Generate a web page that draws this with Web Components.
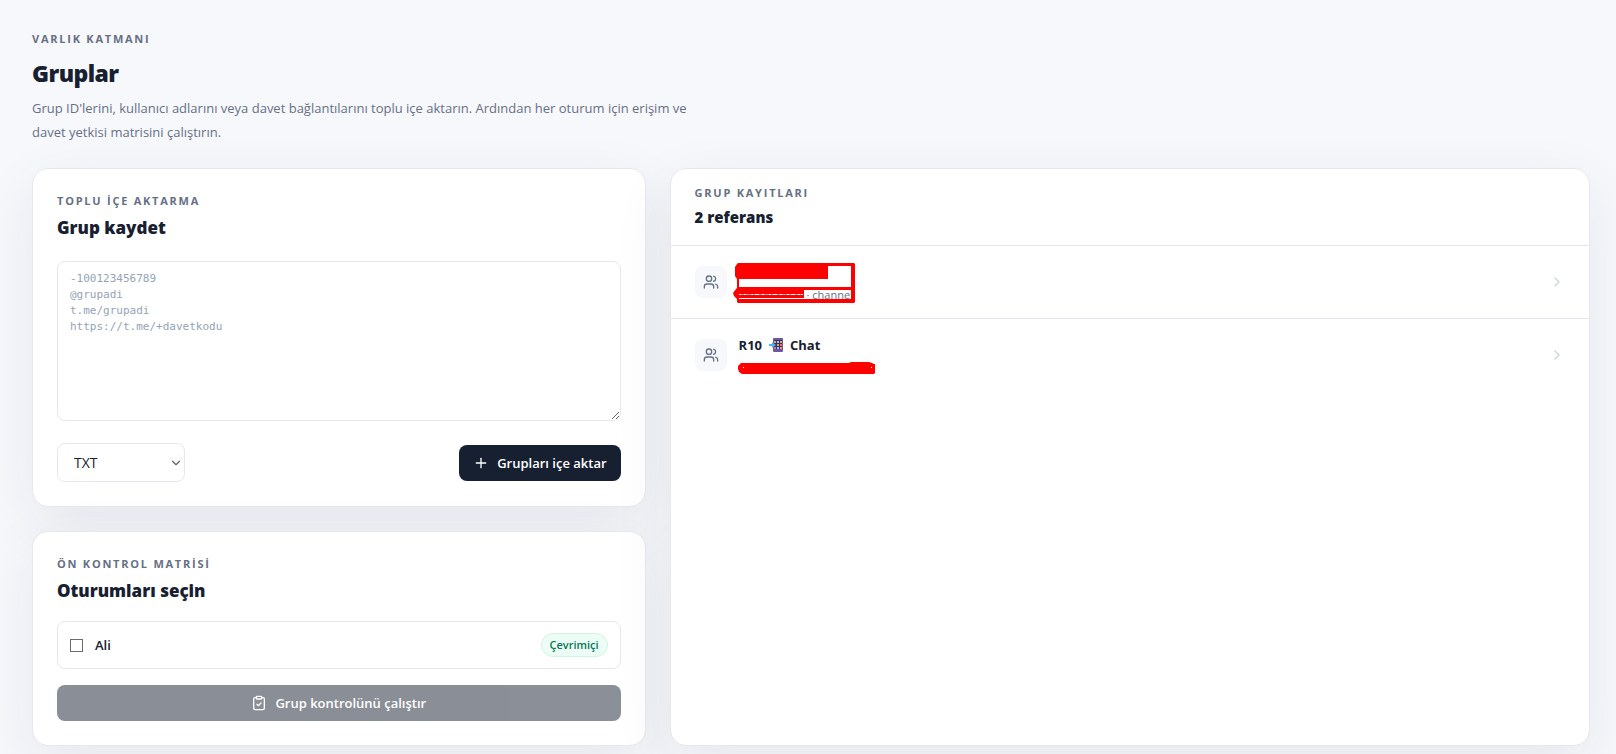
<!DOCTYPE html>
<html lang="tr">
<head>
<meta charset="utf-8">
<meta name="viewport" content="width=device-width, initial-scale=1">
<title>Gruplar</title>
<style>
  :root {
    --ink: #172030;
    --muted: #667085;
    --line: #e6e8ee;
    --surface: #ffffff;
    --canvas: #f7f8fc;
  }

  body {
    margin: 0;
    background: var(--canvas);
    color: var(--ink);
    font-family: "Segoe UI", "Open Sans", "Noto Sans", sans-serif;
    font-size: 13px;
    line-height: 20px;
  }
</style>
</head>
<body>
<groups-page></groups-page>

<script>
// small line icons on a 24 unit grid
const ICONS = {
  users: '<path d="M16 21v-2a4 4 0 0 0-4-4H6a4 4 0 0 0-4 4v2"/><circle cx="9" cy="7" r="4"/><path d="M22 21v-2a4 4 0 0 0-3-3.87"/><path d="M16 3.13a4 4 0 0 1 0 7.75"/>',
  plus: '<path d="M5 12h14"/><path d="M12 5v14"/>',
  chevron: '<path d="m9 18 6-6-6-6"/>',
  down: '<path d="m6 9 6 6 6-6"/>',
  clipboard: '<rect x="8" y="2" width="8" height="4" rx="1"/><path d="M16 4h2a2 2 0 0 1 2 2v14a2 2 0 0 1-2 2H6a2 2 0 0 1-2-2V6a2 2 0 0 1 2-2h2"/><path d="m9 14 2 2 4-4"/>'
};

class LineIcon extends HTMLElement {
  constructor() {
    super();
    this.attachShadow({ mode: 'open' });
  }

  connectedCallback() {
    this.shadowRoot.innerHTML = `
      <style>
        :host { display: block; width: 16px; height: 16px; flex: none; }
        svg { display: block; width: 100%; height: 100%; }
      </style>
      <svg viewBox="0 0 24 24" fill="none" stroke="currentColor" stroke-width="2"
        stroke-linecap="round" stroke-linejoin="round" aria-hidden="true">${ICONS[this.getAttribute('name')]}</svg>
    `;
  }
}
customElements.define('line-icon', LineIcon);

class SectionHeading extends HTMLElement {
  constructor() {
    super();
    this.attachShadow({ mode: 'open' });
    this.shadowRoot.innerHTML = `
      <style>
        :host { display: block; }
        .eyebrow {
          margin: 0 0 5px;
          color: var(--muted);
          font-size: 11px;
          font-weight: 700;
          line-height: 16px;
          letter-spacing: 0.16em;
        }
        .title ::slotted(*) {
          margin: 0;
          font-size: 17px;
          font-weight: 800;
          line-height: 28px;
        }
        :host([size="small"]) .eyebrow { margin-bottom: 4px; }
        :host([size="small"]) .title ::slotted(*) { font-size: 15px; line-height: 24px; }
        :host([size="large"]) .eyebrow { margin-bottom: 10px; }
        :host([size="large"]) .title ::slotted(*) {
          font-size: 23px;
          line-height: 32px;
          letter-spacing: -0.025em;
        }
      </style>
      <p class="eyebrow"><slot name="eyebrow"></slot></p>
      <div class="title"><slot></slot></div>
    `;
  }
}
customElements.define('section-heading', SectionHeading);

class PanelCard extends HTMLElement {
  constructor() {
    super();
    this.attachShadow({ mode: 'open' });
    this.shadowRoot.innerHTML = `
      <style>
        :host {
          display: block;
          box-sizing: border-box;
          padding: 24px;
          background: var(--surface);
          border: 1px solid var(--line);
          border-radius: 16px;
          box-shadow: 0 18px 60px rgba(23, 32, 48, 0.08);
        }
        :host([flush]) { padding: 0; }
      </style>
      <slot></slot>
    `;
  }
}
customElements.define('panel-card', PanelCard);

class ActionButton extends HTMLElement {
  constructor() {
    super();
    this.attachShadow({ mode: 'open' });
  }

  connectedCallback() {
    const disabled = this.hasAttribute('disabled') ? 'disabled' : '';
    this.shadowRoot.innerHTML = `
      <style>
        :host { display: block; }
        button {
          display: flex;
          align-items: center;
          justify-content: center;
          gap: 8px;
          width: 100%;
          height: 36px;
          padding: 0 14px;
          border: 0;
          border-radius: 8px;
          background: var(--ink);
          color: #fff;
          font: inherit;
          font-weight: 600;
          cursor: pointer;
        }
        button:disabled { opacity: 0.5; cursor: not-allowed; }
      </style>
      <button type="button" ${disabled}>
        <line-icon name="${this.getAttribute('icon')}"></line-icon>
        <slot></slot>
      </button>
    `;
  }
}
customElements.define('action-button', ActionButton);

class ImportForm extends HTMLElement {
  constructor() {
    super();
    this.attachShadow({ mode: 'open' });
    this.shadowRoot.innerHTML = `
      <style>
        :host { display: block; margin-top: 19px; }
        textarea, select {
          box-sizing: border-box;
          background: var(--surface);
          border: 1px solid var(--line);
          border-radius: 8px;
          color: var(--ink);
        }
        textarea {
          display: block;
          width: 100%;
          height: 160px;
          margin: 0;
          padding: 9px 12px;
          font: 11px/16px Consolas, "DejaVu Sans Mono", monospace;
          resize: vertical;
        }
        textarea::placeholder { color: #94a3b8; opacity: 1; }
        .actions {
          display: flex;
          align-items: center;
          justify-content: space-between;
          gap: 12px;
          margin-top: 22px;
        }
        .picker { display: grid; align-items: center; }
        .picker > * { grid-area: 1 / 1; }
        .picker line-icon {
          width: 14px;
          height: 14px;
          margin-right: 2px;
          justify-self: end;
          color: #5f6368;
          pointer-events: none;
        }
        select {
          appearance: none;
          width: 128px;
          height: 39px;
          padding: 0 16px;
          font: inherit;
          font-size: 14px;
        }
      </style>
      <textarea aria-label="Grup listesi" placeholder="-100123456789&#10;@grupadi&#10;t.me/grupadi&#10;https://t.me/+davetkodu"></textarea>
      <div class="actions">
        <div class="picker">
          <select aria-label="Biçim"><option>TXT</option></select>
          <line-icon name="down"></line-icon>
        </div>
        <action-button icon="plus">Grupları içe aktar</action-button>
      </div>
    `;
  }
}
customElements.define('import-form', ImportForm);

class SessionOption extends HTMLElement {
  constructor() {
    super();
    this.attachShadow({ mode: 'open' });
    this.shadowRoot.innerHTML = `
      <style>
        :host { display: block; margin: 16px 0; }
        label {
          display: flex;
          align-items: center;
          gap: 12px;
          box-sizing: border-box;
          height: 48px;
          padding: 0 12px;
          border: 1px solid var(--line);
          border-radius: 8px;
          font-weight: 600;
        }
        input {
          appearance: none;
          width: 13px;
          height: 13px;
          margin: 0;
          border: 1px solid #6b6b6b;
          background: #fff;
        }
        input:checked { background: var(--ink); }
        .status {
          margin-left: auto;
          padding: 3px 8px;
          border: 1px solid #d1f5e4;
          border-radius: 12px;
          background: #ecfdf5;
          color: #047857;
          font-size: 11px;
          font-weight: 600;
          line-height: 16px;
        }
      </style>
      <label>
        <input type="checkbox">
        <slot></slot>
        <span class="status"><slot name="status"></slot></span>
      </label>
    `;
  }
}
customElements.define('session-option', SessionOption);

class GroupRow extends HTMLElement {
  constructor() {
    super();
    this.attachShadow({ mode: 'open' });
    this.shadowRoot.innerHTML = `
      <style>
        :host { display: block; border-top: 1px solid var(--line); }
        a {
          display: flex;
          align-items: center;
          gap: 12px;
          padding: 16px 24px;
          color: inherit;
          text-decoration: none;
        }
        .avatar {
          display: grid;
          place-items: center;
          width: 32px;
          height: 32px;
          border-radius: 8px;
          background: var(--canvas);
          color: var(--muted);
        }
        .text { position: relative; flex: 1; min-width: 0; }
        .name {
          display: flex;
          align-items: center;
          gap: 7px;
          height: 20px;
          font-weight: 700;
        }
        .meta {
          height: 16px;
          margin-top: 4px;
          color: var(--muted);
          font-size: 11px;
          line-height: 18px;
        }
        .go { color: #cbd5e1; }
        ::slotted(svg) { flex: none; }
      </style>
      <a href="#">
        <span class="avatar"><line-icon name="users"></line-icon></span>
        <div class="text">
          <div class="name"><slot name="name"></slot></div>
          <div class="meta"><slot name="meta"></slot></div>
          <slot name="mark"></slot>
        </div>
        <line-icon class="go" name="chevron"></line-icon>
      </a>
    `;
  }
}
customElements.define('group-row', GroupRow);

class GroupsPage extends HTMLElement {
  constructor() {
    super();
    this.attachShadow({ mode: 'open' });
    this.shadowRoot.innerHTML = `
      <style>
        :host { display: block; padding: 31px 26px 8px 32px; }
        .intro {
          max-width: 672px;
          margin: 7px 0 24px;
          color: var(--muted);
          line-height: 24px;
        }
        .layout {
          display: grid;
          grid-template-columns: minmax(0, 2fr) minmax(0, 3fr);
          gap: 24px;
        }
        .side { display: grid; gap: 24px; align-content: start; }
        .list-head { padding: 16px 24px; }
        .mark { position: absolute; left: -6px; top: 0; overflow: visible; }
        .known { padding-left: 68px; }
      </style>
      <header>
        <section-heading size="large"><span slot="eyebrow">VARLIK KATMANI</span><h1>Gruplar</h1></section-heading>
        <p class="intro">Grup ID'lerini, kullanıcı adlarını veya davet bağlantılarını toplu içe aktarın. Ardından her oturum için erişim ve davet yetkisi matrisini çalıştırın.</p>
      </header>
      <main class="layout">
        <div class="side">
          <panel-card>
            <section-heading><span slot="eyebrow">TOPLU İÇE AKTARMA</span><h2>Grup kaydet</h2></section-heading>
            <import-form></import-form>
          </panel-card>
          <panel-card>
            <section-heading><span slot="eyebrow">ÖN KONTROL MATRİSİ</span><h2>Oturumları seçin</h2></section-heading>
            <session-option>Ali<span slot="status">Çevrimiçi</span></session-option>
            <action-button icon="clipboard" disabled>Grup kontrolünü çalıştır</action-button>
          </panel-card>
        </div>
        <panel-card flush>
          <section-heading class="list-head" size="small"><span slot="eyebrow">GRUP KAYITLARI</span><h2>2 referans</h2></section-heading>
          <group-row>
            <span slot="meta" class="known">· channel</span>
            <!-- hand drawn redaction over the name and id -->
            <svg slot="mark" class="mark" width="124" height="42" aria-hidden="true">
              <path d="M4 2 5 1h116l1 1v38l-1 1H5l-1-1v-3l-3-3-1-3 3-4 1-1V17l-2-3V5z
                M6 17v8h112V4H95v13z M6 32v1h64v-1z M6 36v1h112v-9H71v8z" fill="#f00" fill-rule="evenodd"/>
              <path d="M8 32.500h60" stroke="#a5a9b5" stroke-dasharray="3 2 5 2 2 4"/>
            </svg>
          </group-row>
          <group-row>
            <span slot="name">R10</span>
            <svg slot="name" width="14" height="14" viewBox="0 0 14 14" aria-label="📲" role="img">
              <rect x="4" width="10" height="14" rx="1" fill="#6c57a3"/>
              <rect x="5" y="2" width="8" height="9" fill="#3d3163"/>
              <g fill="#f0a050"><path d="M5 3h2v2H5zM11 3h2v2h-2zM8 6h2v2H8zM11 9h2v2h-2z"/></g>
              <g fill="#f2705c"><path d="M11 6h2v2h-2zM5 9h2v2H5z"/></g>
              <g fill="#8ec9f5"><path d="M8 3h2v2H8zM8 9h2v2H8z"/></g>
              <path d="M0 6h3V4l4 3-4 3V8H0z" fill="#45b5f2"/>
            </svg>
            <span slot="name">Chat</span>
            <svg slot="mark" class="mark" width="144" height="42" aria-hidden="true">
              <path d="M5 31 8 28h108l2-1h18l3 1 2 1h1v9l-1 1H9l-3-2-1-3z" fill="#f00"/>
              <path d="M10 32h1v1h-1zM138 32h1v1h-1z" fill="#fff"/>
            </svg>
          </group-row>
        </panel-card>
      </main>
    `;
  }
}
customElements.define('groups-page', GroupsPage);
</script>
</body>
</html>
